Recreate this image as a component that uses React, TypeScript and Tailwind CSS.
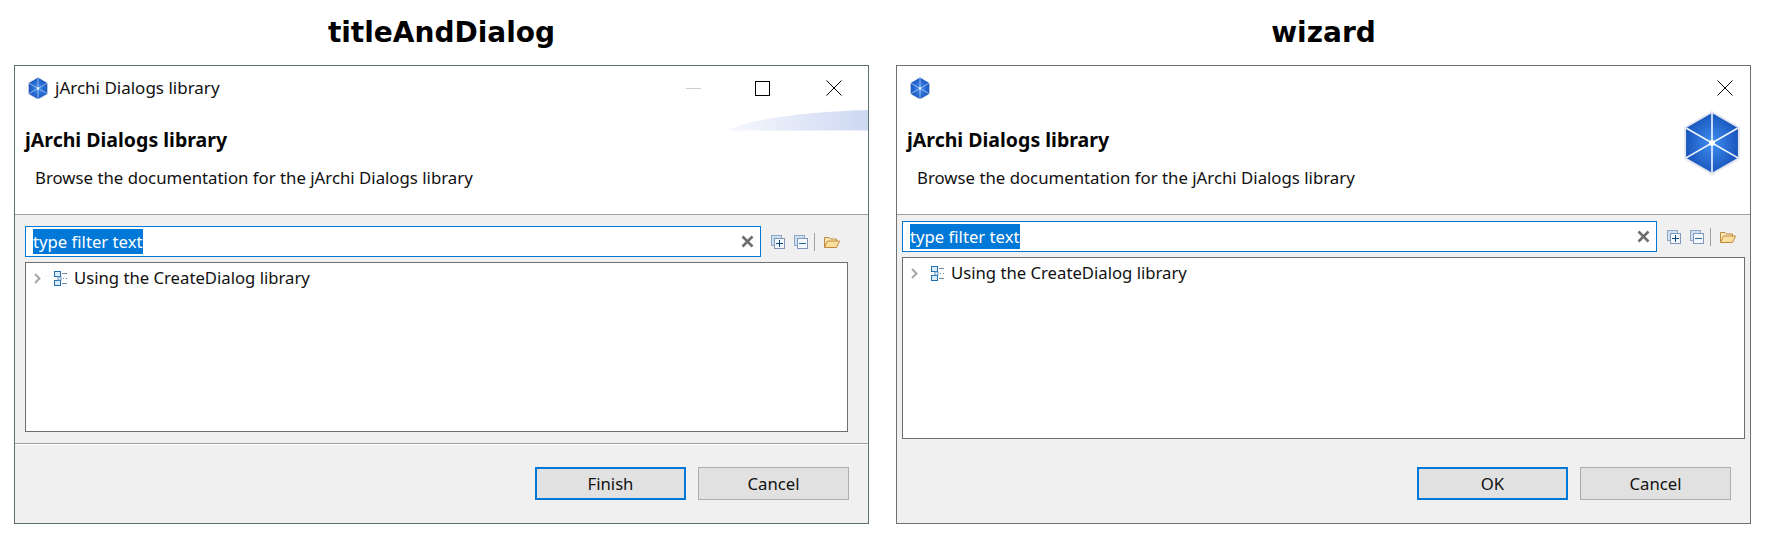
const BODY = "font-['Noto_Sans','Open_Sans',sans-serif]";

function Hex({ size, className = "" }: { size: number; className?: string }) {
  const id = `hex${size}`;
  return (
    <svg width={size} height={size * 1.14} viewBox="0 0 56 64" className={className}>
      <defs>
        <radialGradient id={id} cx="50%" cy="50%" r="55%">
          <stop offset="0%" stopColor="#3f8df0" />
          <stop offset="100%" stopColor="#1450b8" />
        </radialGradient>
      </defs>
      <polygon points="28,1 55,16.5 55,47.5 28,63 1,47.5 1,16.5" fill={`url(#${id})`} stroke="#e3e6ee" strokeWidth="2" />
      <path d="M28 2V62M2 17L54 47M54 17L2 47" stroke="#f4f7ff" strokeWidth="1.6" fill="none" />
      <circle cx="28" cy="32" r="3" fill="#fff" />
    </svg>
  );
}

function CloseGlyph() {
  return (
    <svg width="16" height="16" viewBox="0 0 16 16">
      <path d="M0.5 0.5L15.5 15.5M15.5 0.5L0.5 15.5" stroke="#000" strokeWidth="1" fill="none" />
    </svg>
  );
}

function TreeIcon() {
  return (
    <svg width="14" height="15" viewBox="0 0 14 15">
      <rect x="0.5" y="0.5" width="6" height="5" fill="#dcecfa" stroke="#1f70b4" />
      <rect x="0.5" y="9.5" width="6" height="5" fill="#dcecfa" stroke="#1f70b4" />
      <path d="M8 2.5H13M9 7.5H10M12 7.5H13M8 12.5H13" stroke="#6a8ca6" />
      <rect x="4" y="6" width="3" height="3" fill="#fff" stroke="#5f93bd" strokeWidth="1" />
    </svg>
  );
}

function Chevron() {
  return (
    <svg width="7" height="11" viewBox="0 0 7 11">
      <path d="M1 1L5.5 5.5L1 10" stroke="#a6a6a6" strokeWidth="2" fill="none" />
    </svg>
  );
}

function ExpandIcon({ minus }: { minus?: boolean }) {
  return (
    <svg width="14" height="14" viewBox="0 0 14 14">
      <rect x="0.5" y="0.5" width="10" height="10" fill="#cfe0f2" stroke="#8ea6c4" />
      <rect x="3.5" y="3.5" width="10" height="10" fill="#f4f8fc" stroke="#7f97b8" />
      {minus ? (
        <path d="M5 8.5H12" stroke="#2a6a9a" strokeWidth="1" />
      ) : (
        <path d="M5 8.5H12M8.5 5V12" stroke="#0a4a80" strokeWidth="1" />
      )}
    </svg>
  );
}

function FolderIcon() {
  return (
    <svg width="16" height="12" viewBox="0 0 16 12">
      <path d="M0.5 11V1.5H5L6.5 3H12.5V5" fill="#fbe6b8" stroke="#c08a3c" />
      <path d="M0.5 11.5L3.5 5H15.5L12.5 11.5Z" fill="#fbdf9f" stroke="#c08a3c" />
    </svg>
  );
}

function Filter() {
  return (
    <div className="flex items-center gap-[10px]">
      <div className="flex h-[31px] flex-1 items-center justify-between border border-[#0078d7] bg-white pl-[7px] pr-[6px]">
        <span className="bg-[#0078d7] text-[16.7px] leading-[25px] text-white">type filter text</span>
        <svg width="13" height="13" viewBox="0 0 13 13">
          <path d="M1.5 1.5L11.5 11.5M11.5 1.5L1.5 11.5" stroke="#6e6e6e" strokeWidth="2.6" fill="none" />
        </svg>
      </div>
      <div className="flex items-center">
        <ExpandIcon />
        <span className="ml-[9px]"><ExpandIcon minus /></span>
        <span className="ml-[6px] h-[18px] w-px bg-[#a0a0a0]" />
        <span className="ml-[9px]"><FolderIcon /></span>
      </div>
    </div>
  );
}

function Tree({ className }: { className: string }) {
  return (
    <div className={`border border-[#6e6e6e] bg-white ${className}`}>
      <div className="flex h-[30px] items-center pl-[8px]">
        <Chevron />
        <span className="ml-[13px] flex"><TreeIcon /></span>
        <span className="ml-[6px] text-[16.7px] text-[#111]">Using the CreateDialog library</span>
      </div>
    </div>
  );
}

function Btn({ label, primary }: { label: string; primary?: boolean }) {
  return (
    <div
      className={`flex h-[33px] w-[151px] items-center justify-center bg-[#e1e1e1] text-[16.7px] text-[#111] ${
        primary ? "border-2 border-[#0078d7]" : "border border-[#adadad]"
      }`}
    >
      {label}
    </div>
  );
}

function HeaderText() {
  return (
    <div className="pl-[10px] pt-[18px]">
      <div className="text-[19.5px] font-bold leading-[24px] text-[#050505]">jArchi Dialogs library</div>
      <div className="mt-[14px] pl-[10px] text-[16.8px] leading-[24px] text-[#111]">
        Browse the documentation for the jArchi Dialogs library
      </div>
    </div>
  );
}

function Column({ title, children }: { title: string; children: React.ReactNode }) {
  return (
    <div className="w-[855px]">
      <h2 className="h-[65px] pt-[15px] text-center font-['DejaVu_Sans',sans-serif] text-[28px] font-bold leading-[36px] text-black">
        {title}
      </h2>
      {children}
    </div>
  );
}

function TitleAndDialog() {
  return (
    <div className={`relative flex h-[459px] flex-col border border-[#5f6f6f] bg-[#f0f0f0] ${BODY}`}>
      <div className="relative h-[148px] bg-white">
        <svg className="absolute right-0 top-[44px]" width="141" height="21" viewBox="0 0 141 21">
          <defs>
            <linearGradient id="swoosh" x1="0" x2="1" y1="0" y2="0">
              <stop offset="0%" stopColor="#f6f8fd" />
              <stop offset="100%" stopColor="#cdd8f2" />
            </linearGradient>
          </defs>
          <path d="M0 20.5C25 8 85 1.5 141 0V20.5Z" fill="url(#swoosh)" />
        </svg>
        <div className="relative flex h-[44px] items-center pl-[13px]">
          <Hex size={20} />
          <span className="ml-[7px] text-[17px] text-[#111]">jArchi Dialogs library</span>
          <div className="ml-auto flex items-center pr-[26px]">
            <span className="h-px w-[15px] bg-[#cccccc]" />
            <span className="ml-[54px] h-[15px] w-[15px] border border-black" />
            <span className="ml-[56px]"><CloseGlyph /></span>
          </div>
        </div>
        <HeaderText />
      </div>
      <div className="h-px bg-[#a0a0a0]" />
      <div className="h-[11px]" />
      <div className="pl-[10px] pr-[28px]">
        <Filter />
      </div>
      <div className="pl-[10px] pr-[20px] pt-[5px]">
        <Tree className="h-[170px]" />
      </div>
      <div className="mt-[11px] h-px bg-[#a0a0a0]" />
      <div className="h-px bg-white" />
      <div className="flex justify-end gap-[12px] pr-[19px] pt-[22px]">
        <Btn label="Finish" primary />
        <Btn label="Cancel" />
      </div>
    </div>
  );
}

function Wizard() {
  return (
    <div className={`relative flex h-[459px] flex-col border border-[#707070] bg-[#f0f0f0] ${BODY}`}>
      <div className="relative h-[148px] bg-white">
        <Hex size={56} className="absolute right-[10px] top-[45px]" />
        <div className="flex h-[44px] items-center justify-between pl-[13px] pr-[17px]">
          <Hex size={20} />
          <CloseGlyph />
        </div>
        <HeaderText />
      </div>
      <div className="h-px bg-[#a0a0a0]" />
      <div className="h-[6px]" />
      <div className="pl-[5px] pr-[14px]">
        <Filter />
      </div>
      <div className="pl-[5px] pr-[5px] pt-[5px]">
        <Tree className="h-[182px]" />
      </div>
      <div className="flex justify-end gap-[12px] pr-[19px] pt-[28px]">
        <Btn label="OK" primary />
        <Btn label="Cancel" />
      </div>
    </div>
  );
}

export default function App() {
  return (
    <div className="flex h-[537px] w-[1773px] gap-[27px] bg-white pl-[14px]">
      <Column title="titleAndDialog"><TitleAndDialog /></Column>
      <Column title="wizard"><Wizard /></Column>
    </div>
  );
}
